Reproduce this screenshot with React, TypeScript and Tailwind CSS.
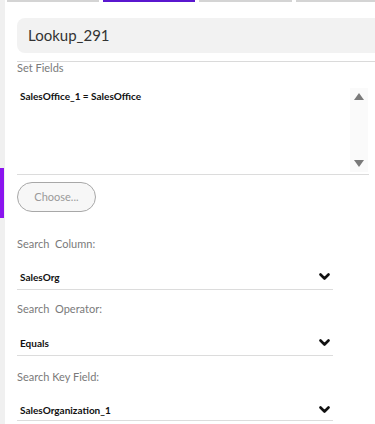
const fontClass = "font-['Lato','Open_Sans',sans-serif]";

function Chevron() {
  return (
    <svg width="11" height="8" viewBox="0 0 11 8" className="shrink-0">
      <polyline points="1.5,1.5 5.5,5.5 9.5,1.5" fill="none" stroke="#111" strokeWidth="2.6" strokeLinecap="round" strokeLinejoin="round" />
    </svg>
  );
}

function SelectField({ label, value, labelTop, valueTop, valueBottom }: { label: string; value: string; labelTop: string; valueTop: string; valueBottom: string }) {
  return (
    <div>
      <p className={`${labelTop} whitespace-pre text-[11px] leading-4 text-[#7a7a7a]`}>{label}</p>
      <div className={`${valueTop} ${valueBottom} flex w-[316px] items-center justify-between border-b border-[#dcdcdc] pl-[3px] pr-[3px]`}>
        <span className="text-[10px] font-bold leading-4 text-[#111]">{value}</span>
        <Chevron />
      </div>
    </div>
  );
}

export default function App() {
  return (
    <div className={`${fontClass} flex h-[424px] w-[375px] overflow-hidden bg-white`}>
      <div className="w-[5px] shrink-0 bg-[#f0f0f0]">
        <div className="mt-[168px] h-[50px] w-[4px] bg-[#8a14ee]" />
      </div>

      <div className="min-w-0 flex-1">
        <div className="ml-[2px] flex h-[2px] gap-[4px]">
          <div className="h-[2px] w-[93px] bg-[#d4d4d4]" />
          <div className="h-[2px] w-[94px] bg-[#5a17cf]" />
          <div className="h-[2px] w-[94px] bg-[#d4d4d4]" />
          <div className="h-[2px] w-[80px] bg-[#d4d4d4]" />
        </div>

        <div className="pl-[12px]">
          <div className="mt-[16px] flex h-[35px] w-[380px] items-center rounded-lg bg-[#f2f2f2] pl-[11px] text-[15px] text-[#333]">
            Lookup_291
          </div>
          <div className="mt-[8px] h-px w-[380px] bg-[#dadada]" />
          <p className="text-[11px] leading-[12px] text-[#7a7a7a]">Set Fields</p>

          <div className="flex h-[101px] w-[352px] justify-between border-b border-[#dcdcdc]">
            <p className="pl-[3px] pt-[15px] text-[10px] font-bold leading-[14px] text-[#111]">SalesOffice_1 = SalesOffice</p>
            <div className="mr-px mt-[14px] flex h-[84px] w-[18px] flex-col items-center justify-between bg-[#fafafa] py-[5px]">
              <svg width="10" height="7" viewBox="0 0 10 7">
                <polygon points="5,0 10,7 0,7" fill="#7a7a7a" />
              </svg>
              <svg width="10" height="7" viewBox="0 0 10 7">
                <polygon points="0,0 10,0 5,7" fill="#7a7a7a" />
              </svg>
            </div>
          </div>

          <button
            type="button"
            className="mt-[7px] h-[30px] w-[79px] rounded-full border-[1.5px] border-[#a8a8a8] bg-[#f7f7f7] text-[11px] text-[#9a9a9a]"
          >
            Choose...
          </button>

          <SelectField label="Search  Column:" value="SalesOrg" labelTop="mt-[24px]" valueTop="pt-[17px]" valueBottom="pb-[4px]" />
          <SelectField label="Search  Operator:" value="Equals" labelTop="mt-[11px]" valueTop="pt-[18px]" valueBottom="pb-[4px]" />
          <SelectField label="Search Key Field:" value="SalesOrganization_1" labelTop="mt-[13px]" valueTop="pt-[17px]" valueBottom="pb-[2px]" />
        </div>
      </div>
    </div>
  );
}
